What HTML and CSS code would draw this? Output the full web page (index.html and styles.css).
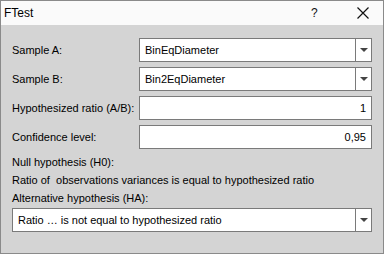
FILE: index.html
```html
<!DOCTYPE html>
<html lang="en">
<head>
  <meta charset="UTF-8" />
  <title>FTest</title>
  <link rel="stylesheet" href="styles.css">
</head>
<body>
  <div class="window">
    <!-- Title bar -->
    <div class="titlebar">
      <span class="title">FTest</span>
      <span class="help">?</span>
      <span class="close">
        <svg width="12" height="12" viewBox="0 0 12 12">
          <path d="M0.5 0.5 L11.5 11.5 M11.5 0.5 L0.5 11.5" stroke="#111" stroke-width="1.2" fill="none"/>
        </svg>
      </span>
    </div>

    <!-- Form -->
    <div class="dialog">
      <div class="fields">
        <label>Sample A:</label>
        <div class="combo">
          <span class="value">BinEqDiameter</span>
          <span class="arrow"></span>
        </div>

        <label>Sample B:</label>
        <div class="combo">
          <span class="value">Bin2EqDiameter</span>
          <span class="arrow"></span>
        </div>

        <label>Hypothesized ratio (A/B):</label>
        <div class="edit">1</div>

        <label>Confidence level:</label>
        <div class="edit">0,95</div>
      </div>

      <div class="line">Null hypothesis (H0):</div>
      <div class="line">Ratio of&nbsp; observations variances is equal to hypothesized ratio</div>
      <div class="line">Alternative hypothesis (HA):</div>

      <div class="combo wide">
        <span class="value">Ratio &hellip; is not equal to hypothesized ratio</span>
        <span class="arrow"></span>
      </div>
    </div>
  </div>
</body>
</html>
```

FILE: styles.css
```css
/* Base */
body {
  margin: 0;
  font-family: "Liberation Sans", Arial, sans-serif;
  font-size: 11px;
  color: #000;
}

.window {
  width: 384px;
  height: 254px;
  box-sizing: border-box;
  border: 1px solid #8a8a8a;
  background: #d4d4d4;
}

/* Title bar */
.titlebar {
  height: 24px;
  background: #fafafa;
  display: flex;
  align-items: center;
  font-size: 12px;
}

.title {
  margin-left: 3px;
  flex: 1;
}

.help {
  width: 12px;
  margin-right: 34px;
  color: #111;
}

.close {
  display: flex;
  margin-right: 14px;
}

/* Form */
.dialog {
  padding: 13px 11px 0 11px;
}

.fields {
  display: grid;
  grid-template-columns: 127px 1fr;
  row-gap: 5px;
  align-items: center;
}

.fields label {
  white-space: nowrap;
}

.combo,
.edit {
  height: 24px;
  box-sizing: border-box;
  border: 1px solid #7a7a7a;
  background: #fff;
}

.combo {
  display: flex;
  align-items: center;
}

.combo .value {
  flex: 1;
  padding-left: 5px;
}

.combo .arrow {
  width: 15px;
  height: 100%;
  border-left: 1px solid #7a7a7a;
  display: flex;
  align-items: center;
  justify-content: center;
}

.combo .arrow::after {
  content: "";
  border-left: 4px solid transparent;
  border-right: 4px solid transparent;
  border-top: 4px solid #444;
}

.edit {
  text-align: right;
  padding-right: 5px;
  line-height: 22px;
}

.line {
  line-height: 18px;
}

.fields + .line {
  margin-top: 4px;
}

.combo.wide {
  margin-top: 1px;
}
```
